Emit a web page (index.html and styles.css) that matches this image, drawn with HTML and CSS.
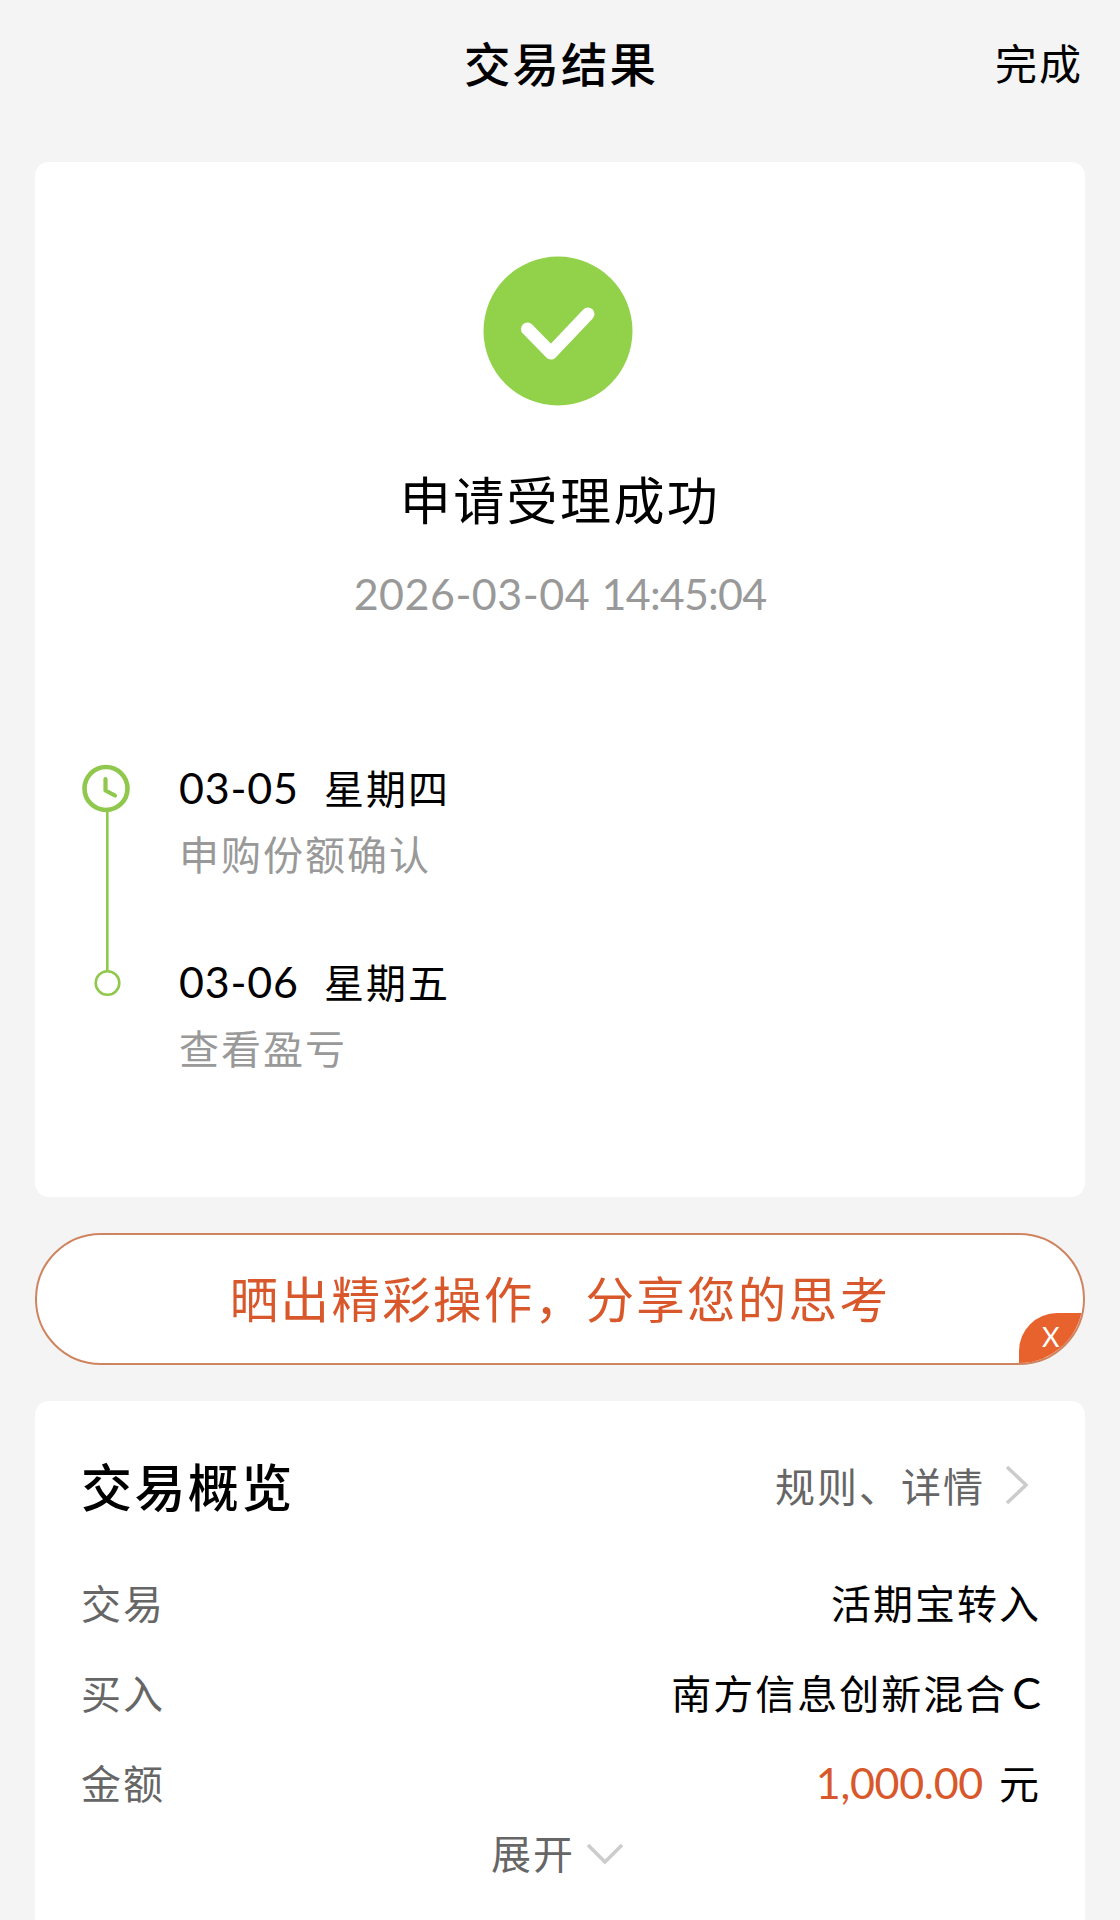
FILE: index.html
```html
<!DOCTYPE html>
<html lang="zh-CN">
<head>
    <meta charset="UTF-8">
    <meta name="viewport" content="width=device-width, initial-scale=1.0">
    <title>交易结果</title>
    <link rel="stylesheet" href="styles.css">
</head>
<body>
    <header class="navbar">
        <h1>交易结果</h1>
        <a class="done">完成</a>
    </header>

    <section class="card result">
        <svg class="success-icon" width="150" height="150" viewBox="0 0 150 150">
            <circle cx="75" cy="75" r="74.5" fill="#92d14a"/>
            <path d="M44.500 73L68 97L105 58" fill="none" stroke="#fff" stroke-width="13" stroke-linecap="round" stroke-linejoin="round"/>
        </svg>
        <h2>申请受理成功</h2>
        <p class="time">2026-03-04 <span class="clock">14:45:04</span></p>

        <div class="timeline">
            <svg class="track" width="50" height="240" viewBox="0 0 50 240" fill="none" stroke="#8fc84c">
                <path d="M26.300 48V207" stroke-width="2.600"/>
                <circle cx="25" cy="24.500" r="21.500" stroke-width="4.600"/>
                <path d="M24.500 15V26.500L34 31.500" stroke-width="4.200" stroke-linecap="round" stroke-linejoin="round"/>
                <circle cx="26.500" cy="219" r="11.800" stroke-width="2.600"/>
            </svg>
            <div class="steps">
                <div class="step">
                    <p class="day"><span class="date">03-05</span>星期四</p>
                    <p class="desc">申购份额确认</p>
                </div>
                <div class="step">
                    <p class="day"><span class="date">03-06</span>星期五</p>
                    <p class="desc">查看盈亏</p>
                </div>
            </div>
        </div>
    </section>

    <div class="share">
        <span>晒出精彩操作，分享您的思考</span>
        <a class="close">X</a>
    </div>

    <section class="card overview">
        <div class="overview-head">
            <h2>交易概览</h2>
            <a class="rules">规则、详情
                <svg width="26" height="42" viewBox="0 0 26 42"><path d="M3 3L22 21L3 39" fill="none" stroke="#ccc" stroke-width="3.500"/></svg>
            </a>
        </div>
        <div class="row"><span class="label">交易</span><span>活期宝转入</span></div>
        <div class="row"><span class="label">买入</span><span>南方信息创新混合<span class="letter">C</span></span></div>
        <div class="row"><span class="label">金额</span><span><span class="amount">1,000.00</span>元</span></div>
        <a class="expand">展开
            <svg class="arrow-down" width="38" height="26" viewBox="0 0 38 26"><path d="M2 3L19 20L36 3" fill="none" stroke="#ccc" stroke-width="3.500"/></svg>
        </a>
    </section>
</body>
</html>
```
FILE: styles.css
```css
* {
    box-sizing: border-box;
}
body {
    font-family: Lato, 'Noto Sans CJK SC', sans-serif;
    margin: 0;
    padding: 0 35px;
    height: 1920px;
    overflow: hidden;
    background: #f4f4f4;
    color: #000;
    font-size: 40px;
    letter-spacing: 2px;
}
h1, h2, p {
    margin: 0;
    font-weight: 400;
}
svg {
    display: block;
    flex: none;
}
.navbar {
    display: grid;
    grid-template-columns: 1fr auto 1fr;
    align-items: center;
    height: 162px;
    padding-bottom: 39px;
}
.navbar h1 {
    grid-column: 2;
    padding-left: 2px;
    font-size: 46.5px;
    font-weight: 500;
}
.done {
    justify-self: end;
    margin-right: 2px;
    font-size: 42px;
}
.card {
    background: #fff;
    border-radius: 14px;
}
.result {
    display: flex;
    flex-direction: column;
    align-items: center;
    height: 1035px;
    padding: 94px 46px 0;
}
.success-icon {
    margin-right: 4px;
}
.result h2 {
    margin-top: 60px;
    font-size: 51px;
    line-height: 70px;
    letter-spacing: 2.4px;
}
.time {
    margin-top: 28px;
    font-size: 43px;
    line-height: 60px;
    letter-spacing: 0.5px;
    color: #999;
}
.clock {
    letter-spacing: -0.8px;
}
.timeline {
    display: flex;
    align-self: stretch;
    margin-top: 140px;
}
.steps {
    margin-left: 48px;
}
.step {
    height: 194px;
}
.day {
    line-height: 48px;
}
.date {
    display: inline-block;
    width: 145px;
    font-size: 43px;
    letter-spacing: 0.8px;
}
.desc {
    margin-top: 17px;
    line-height: 50px;
    color: #999;
}
.share {
    position: relative;
    display: flex;
    align-items: center;
    justify-content: center;
    height: 132px;
    margin: 36px 0;
    padding-bottom: 4px;
    border: 2px solid #cf8460;
    border-radius: 66px;
    overflow: hidden;
    background: #fff;
    color: #d9582b;
    font-size: 48.5px;
    letter-spacing: 2.3px;
}
.close {
    position: absolute;
    right: 0;
    bottom: 0;
    width: 64px;
    height: 50px;
    padding: 7px 0 0 23px;
    border-top-left-radius: 38px;
    background: #e8622d;
    color: #fff;
    font-size: 27px;
    line-height: 34px;
}
.overview {
    height: 560px;
    padding: 48px 44px 0 46px;
}
.overview-head {
    display: flex;
    align-items: center;
    justify-content: space-between;
    height: 72px;
    margin-bottom: 36px;
}
.overview-head h2 {
    font-size: 51px;
    font-weight: 500;
    letter-spacing: 2.4px;
}
.rules {
    display: flex;
    align-items: center;
    gap: 19px;
    margin-right: 11px;
    color: #666;
}
.row {
    display: flex;
    align-items: center;
    justify-content: space-between;
    height: 90px;
}
.label {
    color: #666;
}
.letter {
    margin-left: 5px;
    font-size: 43px;
    letter-spacing: 0;
}
.amount {
    margin-right: 16px;
    color: #d9582b;
    font-size: 43px;
    letter-spacing: -0.3px;
}
.expand {
    display: flex;
    align-items: center;
    justify-content: center;
    gap: 11px;
    height: 50px;
    padding-right: 7px;
    color: #666;
}
.arrow-down {
    margin-top: 6px;
}
```
